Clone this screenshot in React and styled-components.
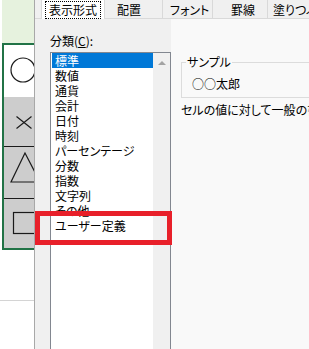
import React from 'react';
import styled, { createGlobalStyle } from 'styled-components';

const GlobalStyle = createGlobalStyle`
  html, body { margin: 0; padding: 0; background: #ffffff; }
  body {
    font-family: "Noto Sans CJK JP", "Noto Sans", sans-serif;
    font-feature-settings: "palt";
  }
`;

const Screen = styled.div`
  position: relative;
  width: 309px;
  height: 349px;
  overflow: hidden;
  display: flex;
  background: #ffffff;
`;

/* ---------- worksheet strip on the left ---------- */

const Sheet = styled.div`
  width: 34px;
  flex: none;
  display: flex;
  flex-direction: column;
  overflow: hidden;
  background: #ffffff;
`;

const GreenCell = styled.div`
  height: 43px;
  background: #e6f2de;
  margin-left: 2px;
`;

const Selection = styled.div`
  margin-left: 2px;
  border: 2px solid #217346;
  border-right: none;
  display: flex;
  flex-direction: column;
`;

const Cell = styled.div`
  height: ${p => p.$h}px;
  background: ${p => (p.$gray ? '#cdcdcd' : '#ffffff')};
  border-bottom: ${p => (p.$line ? '1px solid #1a1a1a' : 'none')};
  overflow: hidden;
  svg { display: block; }
`;

const GridCell = styled.div`
  height: 50px;
  border-bottom: 1px solid #d4d4d4;
`;

/* ---------- format cells dialog ---------- */

const Dialog = styled.div`
  flex: 1;
  display: flex;
  flex-direction: column;
  border-left: 1px solid #a8a8a8;
  background: #f0f0f0;
  color: #000000;
  font-size: 12px;
`;

const TabStrip = styled.div`
  height: 22px;
  display: flex;
  align-items: stretch;
  padding-left: 6px;
  border-bottom: 1px solid #d9d9d9;
  white-space: nowrap;
`;

const Tab = styled.div`
  display: flex;
  align-items: center;
  width: ${p => p.$w}px;
  padding-left: ${p => p.$pl}px;
  padding-top: 1px;
  box-sizing: border-box;
  flex: none;
  line-height: 14px;
  border-right: 1px solid #d9d9d9;
  background: ${p => (p.$active ? '#ffffff' : '#f0f0f0')};
  border-left: ${p => (p.$active ? '1px solid #d9d9d9' : 'none')};
  margin-bottom: ${p => (p.$active ? '-1px' : '0')};
`;

const Focus = styled.span`
  display: flex;
  align-items: center;
  height: 18px;
  padding: 0 3px;
  margin-left: 3px;
  box-sizing: border-box;
  border: 1px dotted #000000;
`;

const Panel = styled.div`
  flex: 1;
  display: flex;
  background: #f9f9f9;
`;

const LeftCol = styled.div`
  display: flex;
  flex-direction: column;
  flex: none;
  padding: 15px 0 0 15px;
  background: #f0f0f0;
`;

const FieldLabel = styled.div`
  line-height: 14px;
  margin-bottom: 4px;
  u { text-decoration: underline; text-underline-offset: 1px; }
`;

const ListBox = styled.div`
  width: 121px;
  height: 320px;
  box-sizing: border-box;
  border: 1px solid #828790;
  background: #ffffff;
  display: flex;
`;

const Items = styled.div`
  flex: 1;
  padding-left: 1px;
`;

const Item = styled.div`
  height: 15px;
  box-sizing: border-box;
  padding: 1px 0 0 3px;
  line-height: 14px;
  background: ${p => (p.$selected ? '#0078d7' : 'transparent')};
  color: ${p => (p.$selected ? '#ffffff' : '#000000')};
  white-space: nowrap;
`;

const ScrollBar = styled.div`
  width: 17px;
  flex: none;
  background: #f0f0f0;
  display: flex;
  justify-content: center;
  padding-top: 8px;
  box-sizing: border-box;
`;

const UpArrow = styled.div`
  width: 0;
  height: 0;
  border-left: 4px solid transparent;
  border-right: 4px solid transparent;
  border-bottom: 4px solid #a3a3a3;
`;

const RightCol = styled.div`
  flex: 1;
  display: flex;
  flex-direction: column;
  padding: 36px 0 0 10px;
  white-space: nowrap;
  overflow: hidden;
`;

const GroupBox = styled.fieldset`
  margin: 0;
  width: 160px;
  height: 43px;
  box-sizing: border-box;
  padding: 0 0 0 4px;
  border: 1px solid #dcdcdc;
  border-right: none;
  legend {
    padding: 0 1px;
    line-height: 14px;
  }
`;

const SampleValue = styled.div`
  line-height: 14px;
  padding: 8px 0 0 6px;
`;

const Description = styled.div`
  line-height: 14px;
  margin-top: 5px;
`;

const Highlight = styled.div`
  position: absolute;
  left: 35px;
  top: 211px;
  width: 137px;
  height: 34px;
  box-sizing: border-box;
  border: 5px solid #e8202a;
  pointer-events: none;
`;

const tabs = [
  { label: '表示形式', w: 64, pl: 0, active: true },
  { label: '配置', w: 58, pl: 12 },
  { label: 'フォント', w: 50, pl: 7 },
  { label: '罫線', w: 55, pl: 18 },
  { label: '塗りつぶし', w: 80, pl: 5 },
];

const categories = [
  '標準', '数値', '通貨', '会計', '日付', '時刻', 'パーセンテージ',
  '分数', '指数', '文字列', 'その他', 'ユーザー定義',
];

export default function App() {
  return (
    <>
      <GlobalStyle />
      <Screen>
        <Sheet>
          <GreenCell />
          <Selection>
            <Cell $h={52}>
              <svg width="30" height="52">
                <circle cx="19" cy="25" r="12" fill="none" stroke="#1a1a1a" strokeWidth="1.2" />
              </svg>
            </Cell>
            <Cell $h={49} $gray $line>
              <svg width="30" height="49">
                <path d="M12.5 19.5 L27.5 31.5 M27.5 19.5 L12.5 31.5" stroke="#1a1a1a" strokeWidth="1.2" fill="none" />
              </svg>
            </Cell>
            <Cell $h={51} $gray $line>
              <svg width="30" height="51">
                <path d="M21 6 L7 35 L36 35 Z" stroke="#1a1a1a" strokeWidth="1.2" fill="none" />
              </svg>
            </Cell>
            <Cell $h={49} $gray>
              <svg width="30" height="49">
                <rect x="9.5" y="13.5" width="30" height="21" stroke="#1a1a1a" strokeWidth="1.2" fill="none" />
              </svg>
            </Cell>
          </Selection>
          <GridCell />
        </Sheet>

        <Dialog>
          <TabStrip>
            {tabs.map(t => (
              <Tab key={t.label} $w={t.w} $pl={t.pl} $active={t.active}>
                {t.active ? <Focus>{t.label}</Focus> : t.label}
              </Tab>
            ))}
          </TabStrip>
          <Panel>
            <LeftCol>
              <FieldLabel>分類(<u>C</u>):</FieldLabel>
              <ListBox>
                <Items>
                  {categories.map((c, i) => (
                    <Item key={c} $selected={i === 0}>{c}</Item>
                  ))}
                </Items>
                <ScrollBar>
                  <UpArrow />
                </ScrollBar>
              </ListBox>
            </LeftCol>
            <RightCol>
              <GroupBox>
                <legend>サンプル</legend>
                <SampleValue>○○太郎</SampleValue>
              </GroupBox>
              <Description>セルの値に対して一般の書式を設定します。</Description>
            </RightCol>
          </Panel>
        </Dialog>

        <Highlight />
      </Screen>
    </>
  );
}
